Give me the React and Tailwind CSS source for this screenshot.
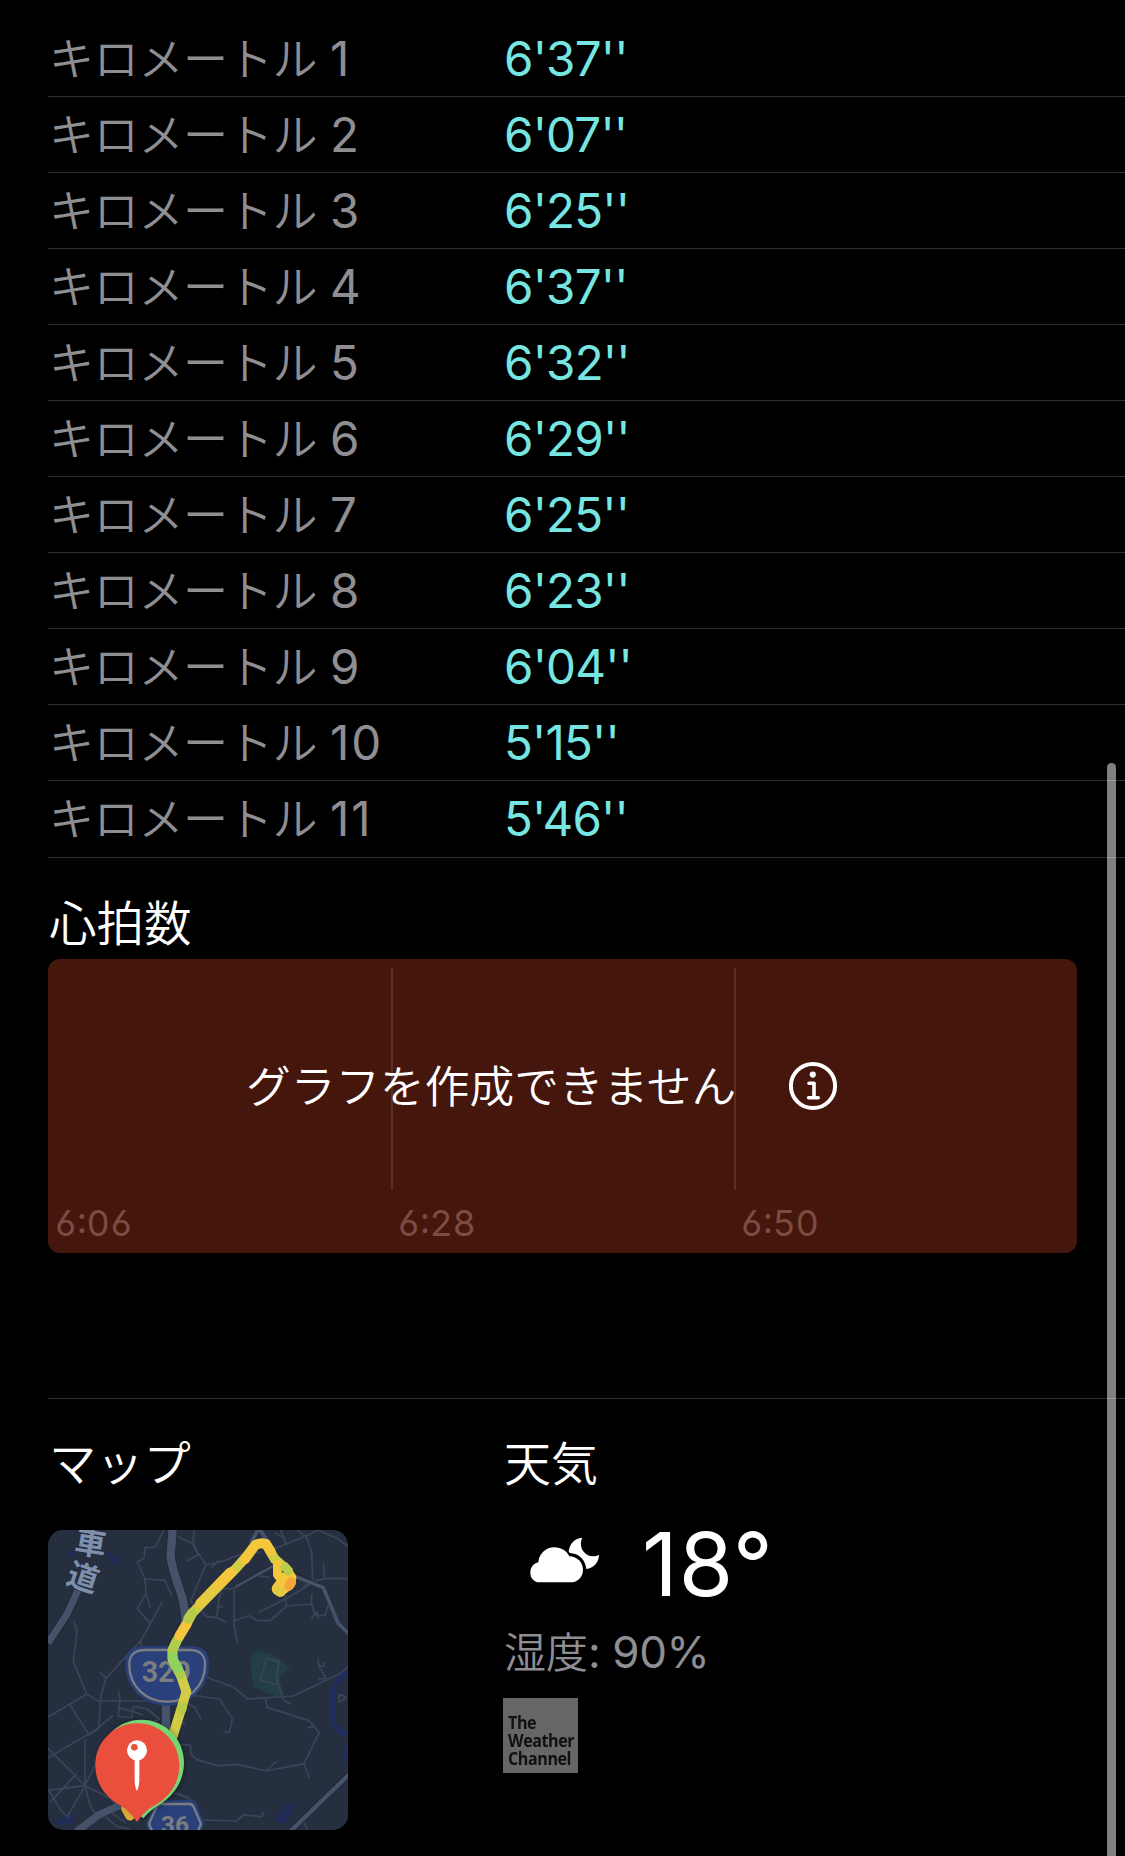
import React from "react";

const splits = [
  ["1", "6'37''"],
  ["2", "6'07''"],
  ["3", "6'25''"],
  ["4", "6'37''"],
  ["5", "6'32''"],
  ["6", "6'29''"],
  ["7", "6'25''"],
  ["8", "6'23''"],
  ["9", "6'04''"],
  ["10", "5'15''"],
  ["11", "5'46''"],
];

const times = ["6:06", "6:28", "6:50"];

function Splits() {
  return (
    <div className="ml-[48px]">
      {splits.map(([n, pace], i) => (
        <div
          key={n}
          className={`flex border-b border-[#2f2f31] leading-[75px] ${i === 10 ? "h-[77px]" : "h-[76px]"}`}
        >
          <div className="flex w-[456px] text-[#8e8e93]">
            <span className="w-[281px] pt-px pl-px text-[45px] tracking-[-0.3px] font-[350] whitespace-nowrap">キロメートル</span>
            <span className="pl-px text-[47.5px] tracking-[2px] font-[370]">{n}</span>
          </div>
          <span className="text-[47.5px] text-[#77e6e2] tracking-[-0.8px] font-[370]">{pace}</span>
        </div>
      ))}
    </div>
  );
}

function InfoIcon() {
  return (
    <svg className="size-[50px]" viewBox="0 0 50 50" fill="none" stroke="#fff">
      <circle cx="24" cy="25" r="22.1" strokeWidth="4" />
      <circle cx="23.8" cy="13.6" r="3.1" fill="#fff" stroke="none" />
      <path d="M20 22.2h5v14.4M19.6 36.8h9.6" strokeWidth="3.6" strokeLinecap="round" strokeLinejoin="round" />
    </svg>
  );
}

function HeartRate() {
  return (
    <section className="ml-[48px]">
      <h2 className="mt-[27px] h-[74px] pt-[2px] pl-px text-[47.5px] leading-[74px] text-white font-[350]">心拍数</h2>
      <div className="relative h-[294px] w-[1029px] rounded-[12px] bg-[#45160c] pt-[9px]">
        <div className="grid h-[222px] grid-cols-3">
          <div />
          <div className="border-l-2 border-[#5c2f26]" />
          <div className="border-l-2 border-[#5c2f26]" />
        </div>
        <div className="grid grid-cols-3 pt-[13px]">
          {times.map((t) => (
            <span key={t} className="pl-[6px] text-[36px] leading-[40px] tracking-[-0.3px] text-[#7c4b41] [font-feature-settings:'ss01','calt','tnum']">
              {t}
            </span>
          ))}
        </div>
        <div className="absolute top-[97px] left-[198px] flex h-[60px] items-center">
          <span className="w-[543px] pt-[2px] text-[44.7px] leading-[60px] whitespace-nowrap text-white font-[350]">
            グラフを作成できません
          </span>
          <InfoIcon />
        </div>
      </div>
    </section>
  );
}

const minorRoads = [
  "M402 45L375 97L345 98L342 130L322 141L345 192L404 196L427 243",
  "M345 192L348 235L362 278",
  "M348 235L322 281L361 326",
  "M397 260L361 326L333 376L228 490L213 540L206 640L54 728",
  "M333 376L333 400",
  "M209 471L228 490",
  "M130 318L141 347L130 440L170 538L206 558L400 558",
  "M170 538L54 606",
  "M120 570L178 661",
  "M165 672L165 812L54 826",
  "M165 812L54 700",
  "M165 812L112 905L95 890L54 822",
  "M178 661L250 600",
  "M60 862L140 776",
  "M165 812L200 740L240 700",
  "M165 812L240 850L270 880",
  "M165 812L180 870L200 900",
  "M265 527L270 555L264 604L306 608L310 574L352 582L388 612L350 630",
  "M262 577L310 590L340 600",
  "M440 62L489 87L492 45",
  "M489 87L504 120L470 137",
  "M489 87L527 150L580 138L632 118L690 112",
  "M545 157L567 135",
  "M527 150L482 258L530 305L560 308L590 322",
  "M560 308L567 250L578 221L612 220L630 212",
  "M578 275L560 275",
  "M612 220L612 330L622 383",
  "M612 318L656 302L682 316L720 317L770 273L845 267L855 300L885 302L895 270",
  "M687 292L770 250L838 210",
  "M765 240L770 273",
  "M845 237L845 267",
  "M843 312L860 290L865 313",
  "M752 45L770 92",
  "M735 55L765 70",
  "M710 110L828 63L865 45L925 72L954 95",
  "M800 45L828 63L845 110L848 200L820 215",
  "M880 145L884 191L954 191",
  "M884 191L848 200",
  "M670 180L718 187",
  "M527 486L612 517L653 552L790 543L890 495L932 475L954 455",
  "M708 431L748 440L739 480L745 510L692 496Z",
  "M745 510L762 557L784 568",
  "M864 430L866 452L880 454L884 440",
  "M866 452L888 490L865 492",
  "M706 552L712 578L837 617L868 652L822 746L708 768L622 748L560 752L500 733L482 716L482 690L440 688",
  "M708 768L740 738",
  "M822 746L838 790",
  "M832 638L852 634",
  "M480 540L568 552L607 612L598 653L580 648",
  "M470 565L493 575L514 613",
  "M440 612L465 627",
  "M515 915L618 918L642 900L695 905L703 888",
  "M430 835L475 850",
  "M440 833L470 845L500 870",
  "M820 915L832 945",
  "M927 538L950 547L927 562Z",
  "M225 905L262 935L300 942",
  "M240 890L290 925",
];

function MapPreview() {
  return (
    <svg className="block size-[300px] rounded-[15px]" viewBox="54 45 900 900" fill="none">
      <rect x="54" y="45" width="900" height="900" fill="#262f3f" />
      <path d="M678 406L662 422L664 480L670 516L736 544L762 540L748 484L782 456L730 420Z" fill="#223f47" />
      <path d="M228 109L262 126L271 140L245 152Z M114 122L128 98L142 122Z M72 928L104 900L132 897L128 928Z M735 918L768 868L794 868L776 910L760 928Z" fill="#222d57" />
      <path d="M954 472Q912 494 910 540L912 625Q925 654 954 660" stroke="#1f2d63" strokeWidth="13" />
      <path d="M954 690Q942 706 944 742" stroke="#1f2d63" strokeWidth="8" />
      <g stroke="#3b4558" strokeWidth="5" strokeLinejoin="round">
        {minorRoads.map((d) => (
          <path key={d} d={d} />
        ))}
      </g>
      <g stroke="#212938" strokeLinejoin="round">
        <path d="M160 190L112 296L54 384" strokeWidth="26" />
        <path d="M428 40L422 120C424 180 468 240 466 320L408 430V680" strokeWidth="31" />
        <path d="M616 216L742 146L880 218L924 324L958 354" strokeWidth="10" />
        <path d="M960 776L776 954" strokeWidth="20" />
      </g>
      <g stroke="#465269" strokeLinejoin="round">
        <path d="M160 190L112 296L54 384" strokeWidth="21" />
        <path d="M428 40L422 120C424 180 468 240 466 320L424 420M408 560V680" strokeWidth="25" />
        <path d="M616 216L742 146" strokeWidth="7" />
        <path d="M662 85L686 40L715 80M785 180L880 218L924 324L958 358" strokeWidth="11" />
        <path d="M960 776L776 954" strokeWidth="13" />
        <path d="M140 950L205 900L280 866" strokeWidth="22" />
      </g>
      <g fill="#7e8fab" stroke="#222b3b" strokeWidth="5" paintOrder="stroke" fontFamily="Noto Sans CJK JP" fontWeight="700" fontSize="94" textAnchor="middle">
        <text transform="translate(177 118) rotate(9)">車</text>
        <text transform="translate(149 219) rotate(18)">道</text>
      </g>

      <path d="M340 394H484Q538 394 537 448C537 520 480 572 411 572C342 572 286 520 286 448Q285 394 340 394Z" fill="#29407a" />
      <path d="M346 405H478Q526 405 525 450C525 514 474 560 411 560C348 560 298 514 298 450Q297 405 346 405Z" stroke="#7b7d80" strokeWidth="7" />
      <text x="409" y="500" fill="#7b7d80" fontFamily="Roboto" fontWeight="700" fontSize="86" textAnchor="middle">329</text>
      <path d="M386 856H484Q494 857 500 867L520 920Q522 930 518 938L510 955H360L351 938Q348 930 350 920L370 867Q376 857 386 856Z" fill="#29407a" />
      <path d="M390 867H480Q488 868 491 876L511 922Q513 928 510 934L500 955H370L360 934Q357 928 359 922L379 876Q382 868 390 867Z" stroke="#7b7d80" strokeWidth="7" />
      <text x="435" y="953" fill="#7b7d80" fontFamily="Roboto" fontWeight="700" fontSize="74" textAnchor="middle">36</text>

      <g strokeWidth="29" strokeLinecap="round" strokeLinejoin="round">
        <path d="M428 665L456 574L469 530L452 480L428 434L427 405L439 380L468 330L488 293L620 158L648 126L676 90Q690 82 708 87L734 132L766 160" stroke="#d2cb45" />
        <path d="M439 380L428 405L427 430L452 480" stroke="#b0cc4c" />
        <path d="M428 425L432 440L444 460" stroke="#8fd25c" />
        <path d="M448 362L470 328" stroke="#f5c63c" />
        <path d="M474 312L486 294" stroke="#b6cb48" />
        <path d="M510 265L600 172M556 218L570 204" stroke="#e6c93f" />
        <path d="M570 205L605 171M645 133L676 90Q690 82 708 87L722 108" stroke="#f5c63c" />
        <path d="M457 575L454 584" stroke="#b7cb49" />
        <path d="M744 150L744 178L758 196L742 218" stroke="#f5c63c" strokeWidth="30" />
        <path d="M762 158L782 188L778 206L750 228L742 222L764 198" stroke="#f5c63c" strokeWidth="34" />
        <path d="M765 158L775 168" stroke="#bccb48" />
        <path d="M743 226L752 231" stroke="#e0ca42" />
        <path d="M784 202L777 213" stroke="#f2a63a" />
        <path d="M288 880L300 902" stroke="#dcae37" />
      </g>
      <circle cx="758" cy="170" r="3" fill="#51582f" />

      <g className="drop-shadow-[0_4px_10px_rgba(0,0,0,0.5)]">
        <path d="M334 614C405 614 462 671 462 742C462 805 425 845 390 868C362 884 350 900 340 910L328 900C305 875 208 830 208 740C208 670 264 614 334 614Z" fill="#76d672" />
      </g>
      <path d="M322 625C392 625 448 681 448 750C448 812 412 850 374 871C348 886 334 903 321 921C308 903 296 886 271 871C232 850 196 812 196 750C196 681 252 625 322 625Z" fill="#ea4f3d" />
      <circle cx="321" cy="706" r="30" fill="#fff" />
      <path d="M314 730H328V798Q326 820 321 828Q315 820 314 798Z" fill="#fff" />
      <circle cx="313" cy="697" r="10" fill="#ea4f3d" />
    </svg>
  );
}

function NightCloud() {
  return (
    <svg className="h-[46px] w-[70px]" viewBox="122 80 210 138" fill="#fff">
      <path d="M152 216C134 216 123 203 123 187C123 171 133 159 147 156C149 130 170 111 195 111C216 111 232 122 240 138C264 139 281 156 281 178C281 200 265 216 244 216Z" />
      <path d="M238 124C240 101 256 83 279 82C272 95 274 113 283 124C295 139 314 141 329 133C329 157 312 173 291 176C289 152 271 130 246 129Q240 128 238 124Z" />
    </svg>
  );
}

function Weather() {
  return (
    <section className="flex w-[400px] flex-col">
      <h2 className="h-[88px] pt-px text-[47px] leading-[88px] text-white font-[350]">天気</h2>
      <div className="mt-[6px] flex h-[100px] items-center">
        <div className="ml-[26px] w-[112px] pb-[6px]">
          <NightCloud />
        </div>
        <span className="pt-px text-[88px] leading-[100px] tracking-[0.9px] text-white font-[410]">18°</span>
      </div>
      <div className="mt-[8px] flex h-[64px] leading-[63px] text-[#8e8e93]">
        <span className="text-[42px] font-[350]">湿度</span>
        <span className="text-[44px] tracking-[-0.4px] whitespace-pre font-[370]">: 90%</span>
      </div>
      <div className="mt-[13px] -ml-px h-[75px] w-[75px] bg-[#666] pt-[15px] pl-[5px]">
        <div className="flex origin-left scale-x-[0.87] flex-col font-['Open_Sans'] text-[18.5px] leading-[18px] font-bold tracking-[-0.5px] text-[#101010]">
          <span>The</span>
          <span>Weather</span>
          <span>Channel</span>
        </div>
      </div>
    </section>
  );
}

export default function App() {
  return (
    <main
      lang="ja"
      className="relative h-[1856px] w-[1125px] overflow-hidden bg-black pt-[21px] font-['Inter','Noto_Sans_CJK_JP',sans-serif]"
    >
      <Splits />
      <HeartRate />
      <div className="mt-[145px] ml-[48px] h-px bg-[#2f2f31]" />
      <div className="ml-[48px] flex pt-[20px]">
        <section className="w-[456px]">
          <h2 className="h-[88px] pt-px pl-px text-[47.3px] leading-[88px] text-white font-[350]">マップ</h2>
          <div className="mt-[23px]">
            <MapPreview />
          </div>
        </section>
        <Weather />
      </div>
      <div className="absolute top-[763px] right-[9px] h-[1110px] w-[9px] rounded-full bg-white/50" />
    </main>
  );
}
